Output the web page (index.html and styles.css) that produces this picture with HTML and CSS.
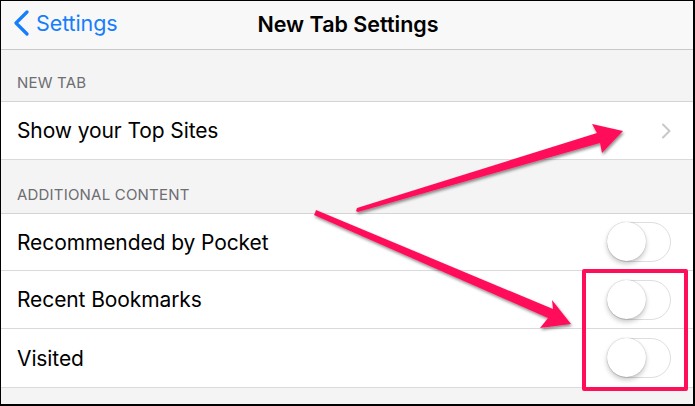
FILE: index.html
```html
<!DOCTYPE html>
<html>
<head>
<meta charset="utf-8">
<link rel="stylesheet" href="styles.css">
</head>
<body>
<div class="screen">
  <div class="navbar">
    <div class="back">
      <svg class="back-chev" width="18" height="26" viewBox="0 0 18 26"><path d="M14 2 L3 13 L14 24" fill="none" stroke="#157efb" stroke-width="3.2" stroke-linecap="round" stroke-linejoin="round"/></svg>
      <span class="back-label">Settings</span>
    </div>
    <div class="title">New Tab Settings</div>
  </div>
  <div class="section-header first">NEW TAB</div>
  <div class="row r1">
    <span class="label">Show your Top Sites</span>
    <svg class="chev" width="10" height="16" viewBox="0 0 10 16"><path d="M2 1.5 L8.5 8 L2 14.5" fill="none" stroke="#c7c7cc" stroke-width="2" stroke-linecap="round" stroke-linejoin="round"/></svg>
  </div>
  <div class="section-header second">ADDITIONAL CONTENT</div>
  <div class="row r2">
    <span class="label">Recommended by Pocket</span>
    <span class="switch"><span class="knob"></span></span>
  </div>
  <div class="row r3">
    <span class="label">Recent Bookmarks</span>
    <span class="switch"><span class="knob"></span></span>
  </div>
  <div class="row r4">
    <span class="label">Visited</span>
    <span class="switch"><span class="knob"></span></span>
  </div>
  <div class="footer-space"></div>

  <div class="highlight"></div>
  <svg class="arrows" width="695" height="406" viewBox="0 0 695 406">
    <defs>
      <filter id="sh" x="-20%" y="-20%" width="140%" height="140%">
        <feDropShadow dx="1" dy="2" stdDeviation="1.6" flood-color="#000" flood-opacity="0.45"/>
      </filter>
    </defs>
    <g filter="url(#sh)" fill="#ff0f5a">
      <polygon points="356,211 357,208 597,133 592,124 623,131 602,153 600,143 358,212"/>
      <polygon points="315,213 316,210 553,309 552,300 571,324 540,328 548,318 314,215"/>
    </g>
  </svg>
</div>
</body>
</html>
```

FILE: styles.css
```css
* { box-sizing: border-box; }
html, body { margin: 0; padding: 0; }
body {
  font-family: "Inter", "Liberation Sans", sans-serif;
  background: #000;
}
.screen {
  position: relative;
  width: 695px;
  height: 406px;
  border-top: 1px solid #000;
  border-left: 1px solid #000;
  border-right: 2px solid #000;
  border-bottom: 2px solid #000;
  background: #f4f4f4;
  overflow: hidden;
  display: flex;
  flex-direction: column;
}
.navbar {
  height: 49px;
  flex: none;
  background: #f8f8f8;
  border-bottom: 1px solid #c9c9cc;
  position: relative;
  display: flex;
  align-items: center;
  justify-content: center;
}
.back {
  position: absolute;
  left: 12px;
  top: 9px;
  display: flex;
  align-items: center;
  gap: 5px;
}
.back-label {
  color: #157efb;
  font-size: 21.5px;
  letter-spacing: -0.1px;
}
.title {
  font-size: 21.5px;
  font-weight: 600;
  color: #000;
  margin-left: 2px;
  margin-top: -2px;
}
.section-header {
  flex: none;
  display: flex;
  align-items: flex-end;
  padding: 0 0 9px 16px;
  font-size: 15px;
  color: #6d6d72;
  letter-spacing: 0.2px;
  border-bottom: 1px solid #d4d4d7;
}
.section-header.first { height: 52px; }
.section-header.second { height: 54px; }
.row {
  flex: none;
  background: #fff;
  border-bottom: 1px solid #dadadc;
  display: flex;
  align-items: center;
  justify-content: space-between;
  padding: 0 22px 0 16px;
  font-size: 21px;
  color: #000;
}
.r1 { height: 58px; padding-right: 22px; }
.r2 { height: 57px; }
.r3 { height: 58px; }
.r4 { height: 59px; }
.label { letter-spacing: -0.1px; }
.switch {
  position: relative;
  width: 64px;
  height: 40px;
  border-radius: 20px;
  border: 1.5px solid #dedee0;
  background: #fff;
  flex: none;
}
.knob {
  position: absolute;
  left: -1px;
  top: -1px;
  width: 39px;
  height: 39px;
  border-radius: 50%;
  background: #fff;
  box-shadow: 0 3px 5px rgba(0,0,0,0.22), 0 0 1px rgba(0,0,0,0.35);
}
.footer-space { flex: 1; }
.highlight {
  position: absolute;
  left: 581px;
  top: 268px;
  width: 106px;
  height: 122px;
  border: 4.5px solid #ff0f5a;
  border-radius: 2px;
}
.arrows {
  position: absolute;
  left: -1px;
  top: -1px;
  pointer-events: none;
}
```
